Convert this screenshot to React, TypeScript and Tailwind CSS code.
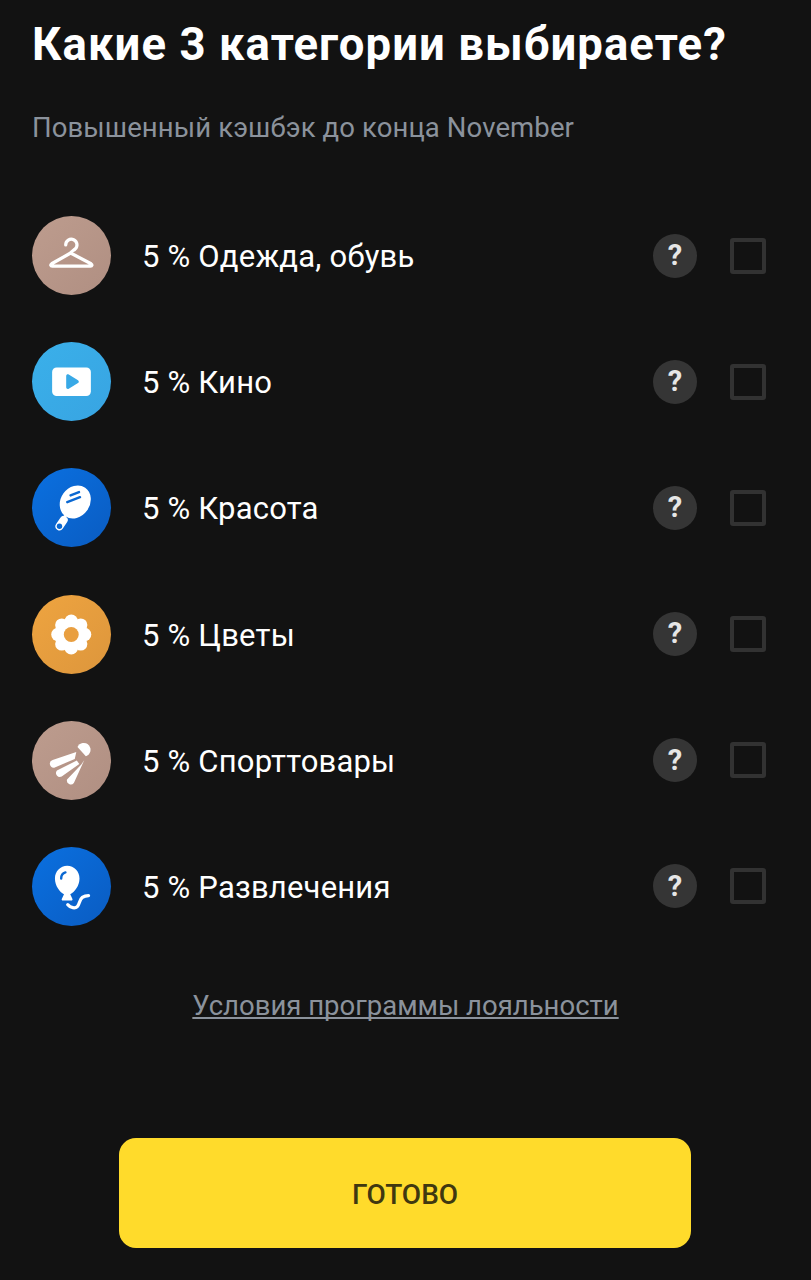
import React from 'react';

const HangerIcon = () => (
	<svg viewBox="0 0 78 78" className="w-full h-full" fill="none" stroke="#fff" strokeWidth="3.2" strokeLinecap="round" strokeLinejoin="round">
		<path d="M33.5 28.5a5.6 5.6 0 1 1 9.3 4.2c-2.4 1.8-4.4 2.4-4.4 4" />
		<path d="M38.4 36.5 19.5 47.2c-1.4.9-1 2.4.6 2.4h38c1.6 0 2-1.5.6-2.4Z" />
	</svg>
);

const VideoIcon = () => (
	<svg viewBox="0 0 78 78" className="w-full h-full">
		<rect x="20" y="25" width="38.5" height="28.5" rx="4.5" fill="#fff" />
		<path d="M34 33.5c0-1.4 1.3-2.1 2.5-1.4l9.2 5.6c1.1.7 1.1 2.2 0 2.9l-9.2 5.6c-1.2.7-2.5 0-2.5-1.4Z" fill="#38a9e6" />
	</svg>
);

const MirrorIcon = () => (
	<svg viewBox="0 0 78 78" className="w-full h-full">
		<ellipse cx="43" cy="33.5" rx="17.2" ry="14.5" transform="rotate(-55 43 33.5)" fill="#fff" />
		<path d="M35 33.7 47.7 28.7M38.3 27l8.4-3.3" stroke="#0a68d2" strokeWidth="2.4" strokeLinecap="round" fill="none" />
		<path d="M33.5 46.5 31.5 50" stroke="#fff" strokeWidth="2.5" />
		<path d="M27.3 57.7 31.5 51.5" stroke="#fff" strokeWidth="8" strokeLinecap="round" />
		<circle cx="27.3" cy="57.7" r="2.7" fill="#0a68d2" />
	</svg>
);

const FlowerIcon = () => (
	<svg viewBox="0 0 78 78" className="w-full h-full">
		<g fill="#fff">
			<circle cx="39" cy="25.7" r="6.6" />
			<circle cx="48.4" cy="29.6" r="6.6" />
			<circle cx="52.3" cy="39" r="6.6" />
			<circle cx="48.4" cy="48.4" r="6.6" />
			<circle cx="39" cy="52.3" r="6.6" />
			<circle cx="29.6" cy="48.4" r="6.6" />
			<circle cx="25.7" cy="39" r="6.6" />
			<circle cx="29.6" cy="29.6" r="6.6" />
			<circle cx="39" cy="39" r="12" />
		</g>
		<circle cx="39" cy="39" r="7.4" fill="#e99f40" />
	</svg>
);

const ShuttleIcon = () => (
	<svg viewBox="0 0 78 78" className="w-full h-full" fill="#fff" strokeLinejoin="round">
		<path d="M45.2 25.5A6.8 6.8 0 1 1 53.5 34.8Z" />
		<path d="M44 30.5 20.5 38.5a3.9 3.9 0 0 0 1.6 7.6L42.5 37.5Z" />
		<path d="M44.5 39 24.8 49a3.9 3.9 0 0 0 4.7 6L47 42.5Z" />
		<path d="M49 43 34.8 58a3.9 3.9 0 0 0 6.8 3.4L52 38.5Z" />
	</svg>
);

const BalloonIcon = () => (
	<svg viewBox="0 0 78 78" className="w-full h-full" fill="none">
		<path d="M35 18.5c6.8 0 12.2 5.6 12.2 12.6 0 7.3-5 13.5-9.2 15.6l2.2 4.7c.3.8-.2 1.6-1 1.6h-8.6c-.8 0-1.4-.8-1-1.6l2.2-4.7c-4.2-2.1-9-8.3-9-15.6 0-7 5.4-12.6 12.2-12.6Z" fill="#fff" />
		<path d="M29 31c0-3 1.5-5.2 4.2-6" stroke="#0a68d2" strokeWidth="2.4" strokeLinecap="round" />
		<path d="M35.5 57c3 3.5 7.5 4 9.5 2 2.5-2.5 2-7 5-9.2 2-1.4 4-1.8 6.2-1.8" stroke="#fff" strokeWidth="3.2" strokeLinecap="round" />
	</svg>
);

const categories = [
	{ name: 'Одежда, обувь', bg: 'bg-gradient-to-br from-[#bd9c8e] to-[#b08f82]', icon: <HangerIcon /> },
	{ name: 'Кино', bg: 'bg-gradient-to-br from-[#3ab0ea] to-[#38a4e2]', icon: <VideoIcon /> },
	{ name: 'Красота', bg: 'bg-gradient-to-br from-[#0a70e0] to-[#0a5cc2]', icon: <MirrorIcon /> },
	{ name: 'Цветы', bg: 'bg-gradient-to-br from-[#eea440] to-[#dd963c]', icon: <FlowerIcon /> },
	{ name: 'Спорттовары', bg: 'bg-gradient-to-br from-[#bd9c8e] to-[#b08f82]', icon: <ShuttleIcon /> },
	{ name: 'Развлечения', bg: 'bg-gradient-to-br from-[#0a70e0] to-[#0a5cc2]', icon: <BalloonIcon /> },
];

export default function App() {
	return (
		<div className="w-[811px] h-[1280px] overflow-hidden bg-[#121212] font-['Roboto',sans-serif] flex flex-col">
			<div className="pl-8 pt-[18px]">
				<h1 className="text-[45.5px] leading-[54px] tracking-[1.07px] font-bold text-white whitespace-nowrap">Какие 3 категории выбираете?</h1>
				<p className="mt-[38px] text-[27.5px] leading-[36px] tracking-[0.11px] text-[#8b929c] whitespace-nowrap">Повышенный кэшбэк до конца November</p>
			</div>

			<div className="mt-[70px] pl-8 pr-[45px] flex flex-col gap-[47.2px]">
				{categories.map((category) => (
					<div key={category.name} className="flex items-center h-[79px]">
						<div className={`w-[78.5px] h-[79px] rounded-full shrink-0 ${category.bg}`}>{category.icon}</div>
						<span className="ml-[31.5px] flex-1 text-[31px] leading-[36px] tracking-[0.2px] text-white whitespace-nowrap mt-[3px]">5 % {category.name}</span>
						<div className="w-[44px] h-[44px] rounded-full bg-[#353535] flex items-center justify-center text-[29px] font-bold text-[#e6e6e6] shrink-0">?</div>
						<div className="ml-[33px] w-[36px] h-[36px] rounded-[3px] border-[4px] border-[#323232] shrink-0" />
					</div>
				))}
			</div>

			<a className="mt-[62px] text-center text-[27.5px] leading-[36px] text-[#8b929c] underline underline-offset-[2px] decoration-[2px] [text-decoration-skip-ink:none] whitespace-nowrap">Условия программы лояльности</a>

			<div className="mt-[114px] flex justify-center">
				<button className="w-[572px] h-[110px] rounded-[17px] bg-[#ffdb2b] pt-1 text-[28px] font-medium text-[#403810] ml-[-1px]">ГОТОВО</button>
			</div>
		</div>
	);
}
